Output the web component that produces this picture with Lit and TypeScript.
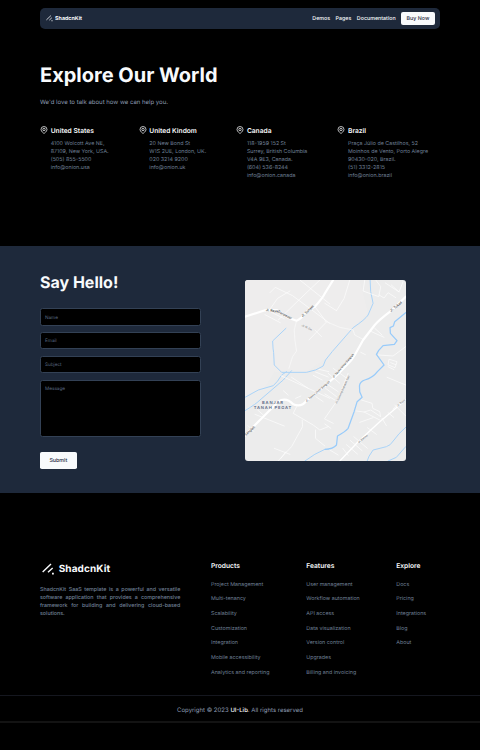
import { LitElement, html, css, svg } from "lit";
import { customElement, property } from "lit/decorators.js";

const offices = [
  { name: "United States", lines: ["4100 Wolcott Ave NE,", "87109, New York, USA.", "(505) 855-5500", "info@onion.usa"] },
  { name: "United Kindom", lines: ["20 New Bond St", "W1S 2UE, London, UK.", "020 3214 9200", "info@onion.uk"] },
  { name: "Canada", lines: ["118-1959 152 St", "Surrey, British Columbia", "V4A 9E3, Canada.", "(604) 536-8244", "info@onion.canada"] },
  { name: "Brazil", lines: ["Praça Júlio de Castilhos, 52", "Moinhos de Vento, Porto Alegre", "90430-020, Brazil.", "(51) 3312-2815", "info@onion.brazil"] },
];

const linkGroups = [
  { title: "Products", links: ["Project Management", "Multi-tenancy", "Scalability", "Customization", "Integration", "Mobile accessibility", "Analytics and reporting"] },
  { title: "Features", links: ["User management", "Workflow automation", "API access", "Data visualization", "Version control", "Upgrades", "Billing and invoicing"] },
  { title: "Explore", links: ["Docs", "Pricing", "Integrations", "Blog", "About"] },
];

@customElement("kit-logo")
class KitLogo extends LitElement {
  @property({ type: Number }) size = 12;
  static styles = css`
    :host { display: block; flex: none; }
    svg { display: block; }
  `;
  render() {
    return html`<svg width=${this.size} height=${this.size} viewBox="0 0 36 36" fill="none" stroke="#f8fafc" stroke-width="4.2">
      <path d="M2 27 27 3M18 28 32 15" />
      <path d="M30 32h5.5" stroke-width="5.5" />
    </svg>`;
  }
}

@customElement("area-map")
class AreaMap extends LitElement {
  static styles = css`
    :host { display: block; border-radius: 3px; overflow: hidden; background: #ececec; }
    svg { display: block; width: 100%; height: 100%; }
    text { font-family: Inter, sans-serif; font-size: 10px; font-weight: 500; fill: #444; text-rendering: geometricPrecision; }
    .place { font-size: 12.4px; font-weight: 600; fill: #5b6884; letter-spacing: 2.5px; text-anchor: middle; }
    .long { font-size: 8.2px; }
    .small { font-size: 8px; fill: #777; }
    .street { stroke: #fff; stroke-width: 1.9; }
    .lane { stroke: #f8f8f8; stroke-width: 2.5; }
    .main { stroke: #fff; stroke-width: 6.5; }
    .minor { stroke: #fff; stroke-width: 4; }
    .water { stroke: #a9d3f8; stroke-width: 3; }
    .river { stroke: #98cbfa; stroke-width: 3.8; }
    path { stroke-linejoin: round; stroke-linecap: round; }
  `;
  render() {
    return html`<svg viewBox="0 0 483 543" fill="none" preserveAspectRatio="none">
      <path d="M0 0H345L370 100 325 143 240 238 185 275H88L55 330 0 350Z" fill="#eeeded" />
      ${svg`
      <path class="water" d="M123 145 83 183Q84 208 86 218L88 255 110 277H185Q215 272 235 258L242 240 262 215 325 143Q362 118 370 105L385 70Q375 35 376 0M0 352 40 330 85 317Q98 306 110 285L125 275M0 392Q36 370 45 360L115 300 140 272" />
      <path class="river" d="M483 98 450 125 446 138 436 143 437 160 457 182 449 193 415 197 402 211 395 223 418 255 398 275Q385 293 360 300 345 305 344 318L345 336 352 352 337 365 328 395 310 445Q300 456 278 468L275 495Q265 507 240 508" />
      <path class="water" d="M240 508Q210 520 180 543M483 442Q460 462 448 480 436 498 425 500L385 510Q370 530 367 543M483 500 455 532 430 543" />
      <path class="street" d="M75 38 91 22 143 47 255 130M225 0 165 57 100 120M72 92 98 55 135 33M60 104 106 128M78 96 118 116M165 0 255 72M210 80 245 126M192 180 245 126M210 150 230 170M275 92 298 55 315 0M240 70 275 92M360 0 355 33 402 50 408 20 393 0M403 45 418 54 430 38 453 53M440 15 463 36 475 5M422 9 463 36" />
      <path class="lane" d="M155 122 148 150 150 180 155 213 143 230 132 265M240 123 285 142 325 150 330 165 355 178" />
      <path class="street" d="M376 153 418 172M390 145 412 165M348 217 362 224M402 225 445 228 483 200M434 238 457 245 451 263 431 255ZM438 248 453 254M430 260 448 269" />
      <path class="street" d="M108 287 255 355M140 292 190 325M205 286 232 300M212 276 250 291M222 268 252 275M155 380 145 400 205 435 225 450 250 440M172 420 173 440 140 500 100 542M88 505 135 523M108 535 123 515M212 450 212 475 240 498M30 403 118 438M38 390 55 405M130 345 115 332M152 355 168 348M9 437 26 454M213 350 235 365" />
      <path class="street" d="M250 280 285 310M265 265 310 298M240 308 280 335M240 323 275 350M240 342 270 360M310 280 278 360 240 415M350 360 382 370 384 385 405 395 407 407M335 393 358 396 405 420M358 396 378 390 408 410M345 427 385 413M427 292 483 315M450 375 483 408M430 398 447 412M412 415 425 437M368 443 395 463M327 470 368 505M316 481 352 512M305 494 338 522M294 505 310 526M240 417 265 430M240 432 258 445M255 510 280 525M445 387 465 370" />
      <path class="main" d="M0 110 60 91 95 90 130 113 155 122Q168 118 185 95L210 80Q235 52 240 40L265 0M483 50 440 92Q405 118 390 135L355 180 330 225 320 240 280 282 240 318 185 362Q170 383 145 373 123 350 100 365L30 435 0 467" />
      <path class="minor" d="M483 360 405 425 340 485 285 543" />
      <text transform="translate(62 93) rotate(6)">Jl. Raya</text>
      <text transform="translate(98 97) rotate(28)">Denpasar</text>
      <text transform="translate(173 112) rotate(-43)">Jl. Sunset</text>
      <text class="small" transform="translate(170 138) rotate(25)">Jl. H. Gn.</text>
      <text transform="translate(439 96) rotate(-39)">Jl. Tukad</text>
      <text class="long" transform="translate(267 294) rotate(-49)">Jl. Teuku Umar Sanglah</text>
      <text class="long" transform="translate(185 366) rotate(-40)">Jl. Teuku Umar Sanglah</text>
      <text class="small" transform="translate(276 372) rotate(-65)">Jl. Gunung Soputan Sari</text>
      <text transform="translate(2 468) rotate(-42)">Sanglah</text>
      <text class="small" transform="translate(342 490) rotate(-40)">Jl. Serma</text>
      <text class="small" transform="translate(459 380) rotate(-39)">Jl. Raya</text>
      <text class="place" x="84" y="373">BANJAR</text>
      <text class="place" x="84" y="387">TANAH PEGAT</text>`}
    </svg>`;
  }
}

@customElement("app-root")
class AppRoot extends LitElement {
  static styles = css`
    :host { display: block; height: 750px; overflow: hidden; background: #000; color: #f8fafc;
      font: 400 5.333px/8px Inter, "Liberation Sans", sans-serif; text-rendering: geometricPrecision; }
    * { box-sizing: border-box; }
    h1, h2, h3, p { margin: 0; }
    .top { margin: 8px 40px 0; height: 21.333px; border-radius: 5px; background: #1e293b;
      display: flex; align-items: center; padding: 0 5.3px 0 6.3px; }
    .brand { display: flex; align-items: center; gap: 2.2px; font-weight: 700; flex: 1; }
    .brand span { padding-top: 1px; }
    nav { display: flex; align-items: center; gap: 5.5px; font-weight: 500; }
    nav span { padding-top: 1px; }
    .buy { height: 13.333px; width: 33.5px; display: grid; place-items: center; border-radius: 2px;
      background: #f8fafc; color: #1e293b; }
    .intro { margin: 33px 40px 0; }
    h1 { font-size: 20px; line-height: 26px; font-weight: 700; }
    .lead { margin-top: 10px; font-size: 6px; line-height: 9px; color: #8d9cb2; }
    .offices { display: flex; justify-content: space-between; margin: 18.3px 52px 0 40px; height: 120.4px; }
    .office { display: grid; grid-template-columns: 8px auto; column-gap: 2.7px; align-content: start; }
    .office svg { width: 8px; height: 8px; margin-top: .8px; }
    .office h3 { font-size: 6.667px; line-height: 10px; font-weight: 600; }
    .address { grid-column: 2; margin-top: 4.4px; color: #718198; white-space: nowrap; }
    .hello { height: 247.4px; background: #1e293b; padding: 24px 74.3px 0 40px; display: flex; justify-content: space-between; }
    .form { width: 160.7px; }
    h2 { font-size: 16px; line-height: 26px; font-weight: 700; margin: -.6px 0 12.9px; }
    .field { height: 17.4px; margin-bottom: 6.4px; border: 1px solid #334155; border-radius: 2.4px;
      background: #000; color: #5a6980; font-size: 4.667px; padding: 4.2px 4px 0; }
    .message { height: 57.5px; margin-bottom: 15.2px; }
    .submit { height: 16.6px; width: 36.7px; display: grid; place-items: center; border-radius: 1.8px; padding-top: 1px;
      background: #f8fafc; color: #1e293b; font-weight: 500; }
    area-map { width: 160.7px; height: 181px; margin-top: 10.3px; }
    footer { height: 201.7px; padding: 67.3px 40px 0; display: grid; grid-template-columns: 171px 95.3px 90px auto; }
    .logo { display: flex; align-items: center; gap: 4.7px; padding-left: 2px; height: 16px; font-size: 10px; letter-spacing: .1px; font-weight: 700; margin-bottom: 9.2px; }
    .logo span { padding-top: 1px; }
    .about { width: 140.3px; color: #718198; font-weight: 500; text-align: justify; }
    .group h3 { font-size: 6.667px; line-height: 10px; font-weight: 600; margin-bottom: 9.9px; }
    .group a { display: block; height: 14.667px; line-height: 8px; color: #718198; white-space: nowrap; }
    .copy { height: 28.4px; border-top: 1px solid #15171f; border-bottom: 2px solid #131313;
      display: grid; place-items: center; padding-top: 5px; font-size: 6px; color: #8d9cb2; }
    .copy b { font-weight: 500; color: #f8fafc; }
  `;
  render() {
    return html`
      <header class="top">
        <div class="brand"><kit-logo .size=${6.6}></kit-logo><span>ShadcnKit</span></div>
        <nav><span>Demos</span><span>Pages</span><span>Documentation</span><span class="buy">Buy Now</span></nav>
      </header>
      <section class="intro">
        <h1>Explore Our World</h1>
        <p class="lead">We'd love to talk about how we can help you.</p>
      </section>
      <section class="offices">
        ${offices.map((o) => html`<div class="office">
          <svg viewBox="0 0 24 24" fill="none" stroke="#f8fafc" stroke-width="2.2">
            <path d="M21 10.5c0 6-9 12-9 12s-9-6-9-12a9 9 0 0 1 18 0Z" /><circle cx="12" cy="10.5" r="3.6" />
          </svg>
          <h3>${o.name}</h3>
          <div class="address">${o.lines.map((l) => html`<div>${l}</div>`)}</div>
        </div>`)}
      </section>
      <section class="hello">
        <div class="form">
          <h2>Say Hello!</h2>
          <div class="field">Name</div>
          <div class="field">Email</div>
          <div class="field">Subject</div>
          <div class="field message">Message</div>
          <div class="submit">Submit</div>
        </div>
        <area-map></area-map>
      </section>
      <footer>
        <div>
          <div class="logo"><kit-logo .size=${12}></kit-logo><span>ShadcnKit</span></div>
          <p class="about">ShadcnKit SaaS template is a powerful and versatile software application that provides a comprehensive framework for building and delivering cloud-based solutions.</p>
        </div>
        ${linkGroups.map((g) => html`<div class="group"><h3>${g.title}</h3>${g.links.map((l) => html`<a>${l}</a>`)}</div>`)}
      </footer>
      <div class="copy"><span>Copyright © 2023 <b>UI-Lib</b>. All rights reserved</span></div>
    `;
  }
}
